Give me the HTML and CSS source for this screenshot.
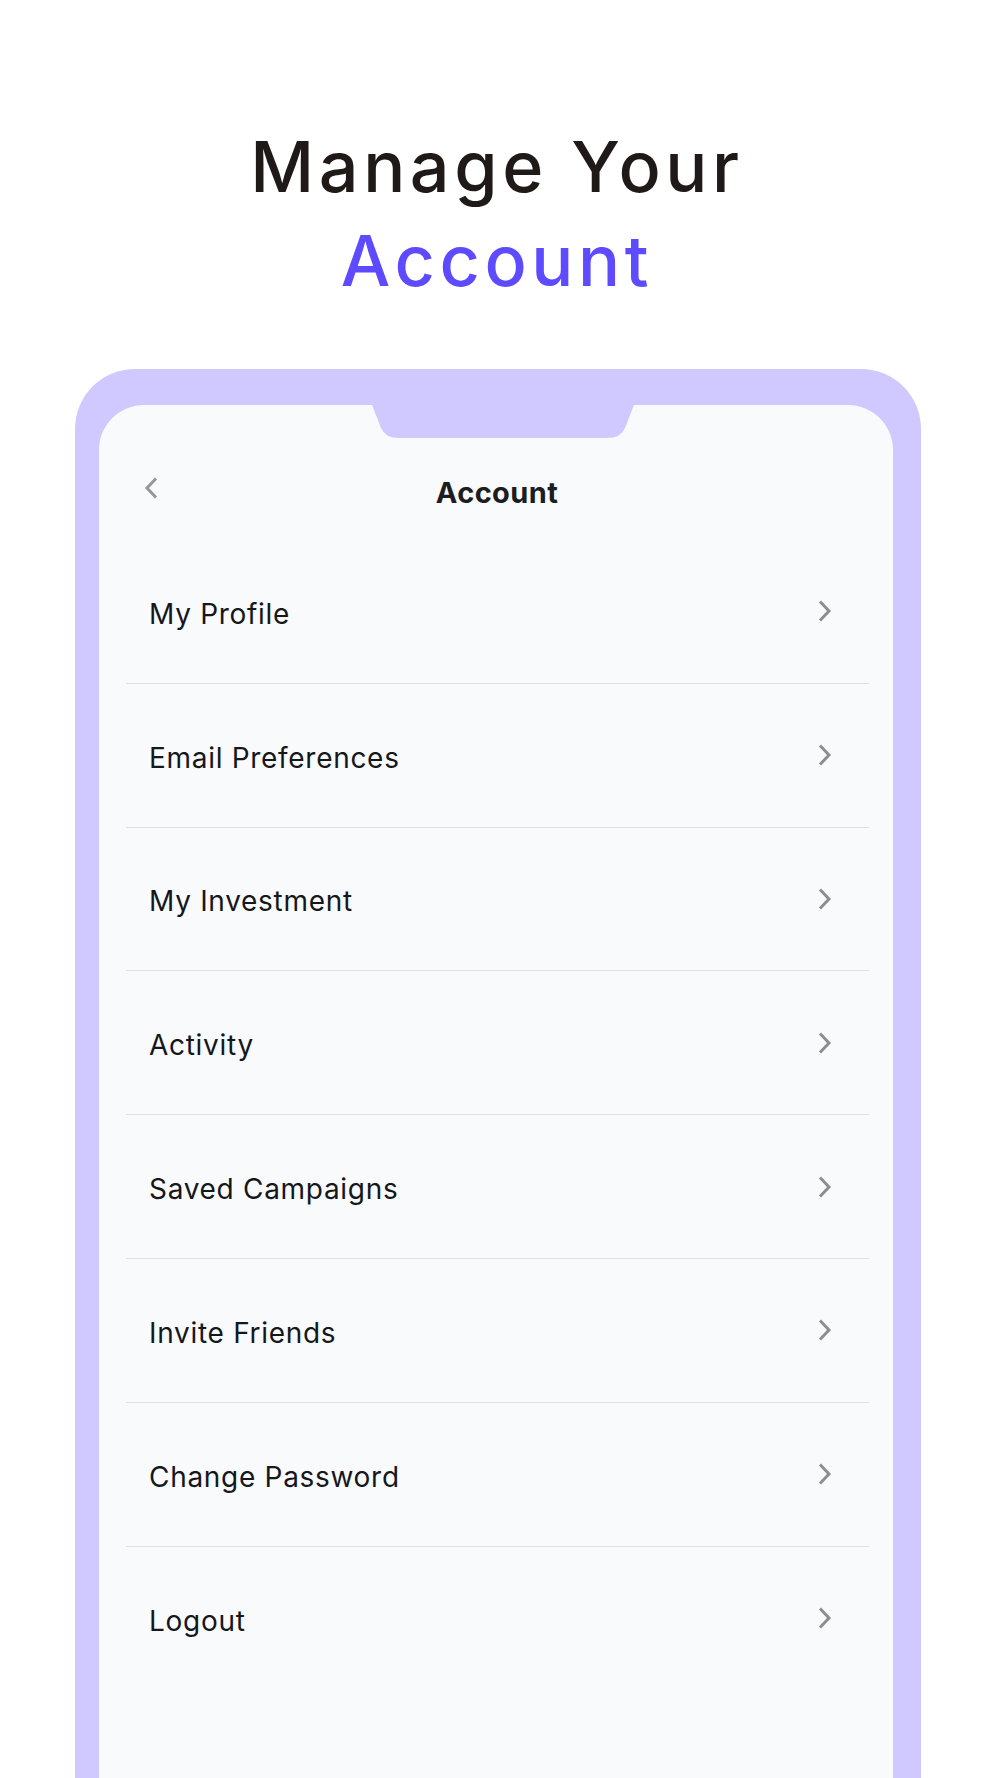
FILE: index.html
```html
<!DOCTYPE html>
<html lang="en">
<head>
<meta charset="utf-8">
<title>Manage Your Account</title>
<link rel="stylesheet" href="styles.css">
</head>
<body>
<div class="page">
  <h1 class="title">
    <span class="title-line">Manage Your</span>
    <span class="title-line accent">Account</span>
  </h1>
  <div class="phone">
    <div class="screen">
      <svg class="notch" width="262" height="34" viewBox="0 0 262 34" aria-hidden="true">
        <path d="M0 0 L9 23 Q13 33 27 33 L235 33 Q249 33 253 23 L262 0 Z" fill="#d0c9ff"/>
      </svg>
      <header class="app-header">
        <span class="back">
          <svg width="16" height="24" viewBox="0 0 16 24" aria-hidden="true">
            <polyline points="13,2.5 4,12 13,21.5" fill="none" stroke="#969696" stroke-width="3"/>
          </svg>
        </span>
        <span class="app-title">Account</span>
        <span></span>
      </header>
      <ul class="menu">
        <li class="row"><span class="label">My Profile</span><svg class="chev" width="16" height="24" viewBox="0 0 16 24"><polyline points="3,2.5 12,12 3,21.5" fill="none" stroke="#8e8e8e" stroke-width="3"/></svg></li>
        <li class="row"><span class="label">Email Preferences</span><svg class="chev" width="16" height="24" viewBox="0 0 16 24"><polyline points="3,2.5 12,12 3,21.5" fill="none" stroke="#8e8e8e" stroke-width="3"/></svg></li>
        <li class="row"><span class="label">My Investment</span><svg class="chev" width="16" height="24" viewBox="0 0 16 24"><polyline points="3,2.5 12,12 3,21.5" fill="none" stroke="#8e8e8e" stroke-width="3"/></svg></li>
        <li class="row"><span class="label">Activity</span><svg class="chev" width="16" height="24" viewBox="0 0 16 24"><polyline points="3,2.5 12,12 3,21.5" fill="none" stroke="#8e8e8e" stroke-width="3"/></svg></li>
        <li class="row"><span class="label">Saved Campaigns</span><svg class="chev" width="16" height="24" viewBox="0 0 16 24"><polyline points="3,2.5 12,12 3,21.5" fill="none" stroke="#8e8e8e" stroke-width="3"/></svg></li>
        <li class="row"><span class="label">Invite Friends</span><svg class="chev" width="16" height="24" viewBox="0 0 16 24"><polyline points="3,2.5 12,12 3,21.5" fill="none" stroke="#8e8e8e" stroke-width="3"/></svg></li>
        <li class="row"><span class="label">Change Password</span><svg class="chev" width="16" height="24" viewBox="0 0 16 24"><polyline points="3,2.5 12,12 3,21.5" fill="none" stroke="#8e8e8e" stroke-width="3"/></svg></li>
        <li class="row last"><span class="label">Logout</span><svg class="chev" width="16" height="24" viewBox="0 0 16 24"><polyline points="3,2.5 12,12 3,21.5" fill="none" stroke="#8e8e8e" stroke-width="3"/></svg></li>
      </ul>
    </div>
  </div>
</div>
</body>
</html>
```

FILE: styles.css
```css
* { box-sizing: border-box; }

html, body {
  margin: 0;
  padding: 0;
  background: #ffffff;
}

body {
  width: 1000px;
  height: 1778px;
  overflow: hidden;
  font-family: Inter, "Noto Sans", "Liberation Sans", sans-serif;
}

.page {
  display: flex;
  flex-direction: column;
  align-items: flex-start;
  padding-top: 120px;
}

.title {
  margin: 0;
  width: 1000px;
  display: flex;
  flex-direction: column;
  align-items: center;
  font-family: Inter, "Liberation Sans", sans-serif;
  font-weight: 500;
  font-size: 70px;
  line-height: 94px;
  letter-spacing: 4.6px;
  color: #1f1a17;
  padding-right: 6px;
}

.title-line { display: block; }

.accent { color: #5e4bff; }

.phone {
  margin-top: 61px;
  margin-left: 75px;
  width: 846px;
  height: 1420px;
  background: #d0c9ff;
  border-radius: 60px 60px 0 0;
  padding: 36px 28px 0 24px;
}

.screen {
  position: relative;
  height: 100%;
  background: #f9fafc;
  border-radius: 45px 45px 0 0;
  padding-top: 56px;
}

.notch {
  position: absolute;
  top: 0;
  left: 273px;
  display: block;
}

.app-header {
  display: grid;
  grid-template-columns: 1fr auto 1fr;
  align-items: center;
  height: 60px;
  padding: 0 44px;
}

.back {
  display: flex;
  align-items: center;
  padding-bottom: 6px;
}

.back svg { display: block; }

.app-title {
  font-weight: 700;
  font-size: 29px;
  color: #1b1d20;
  letter-spacing: 0.4px;
  padding-top: 2px;
  padding-left: 2px;
}

.menu {
  list-style: none;
  margin: 19px 24px 0 27px;
  padding: 0;
}

.row {
  display: flex;
  align-items: center;
  justify-content: space-between;
  height: 143.8px;
  border-bottom: 1px solid #dedee4;
  padding: 0 36px 0 23px;
}

.row.last { border-bottom: none; }

.label {
  font-size: 28px;
  font-weight: 400;
  color: #16171a;
  letter-spacing: 0.7px;
  padding-top: 5px;
}

.chev { display: block; }
```
